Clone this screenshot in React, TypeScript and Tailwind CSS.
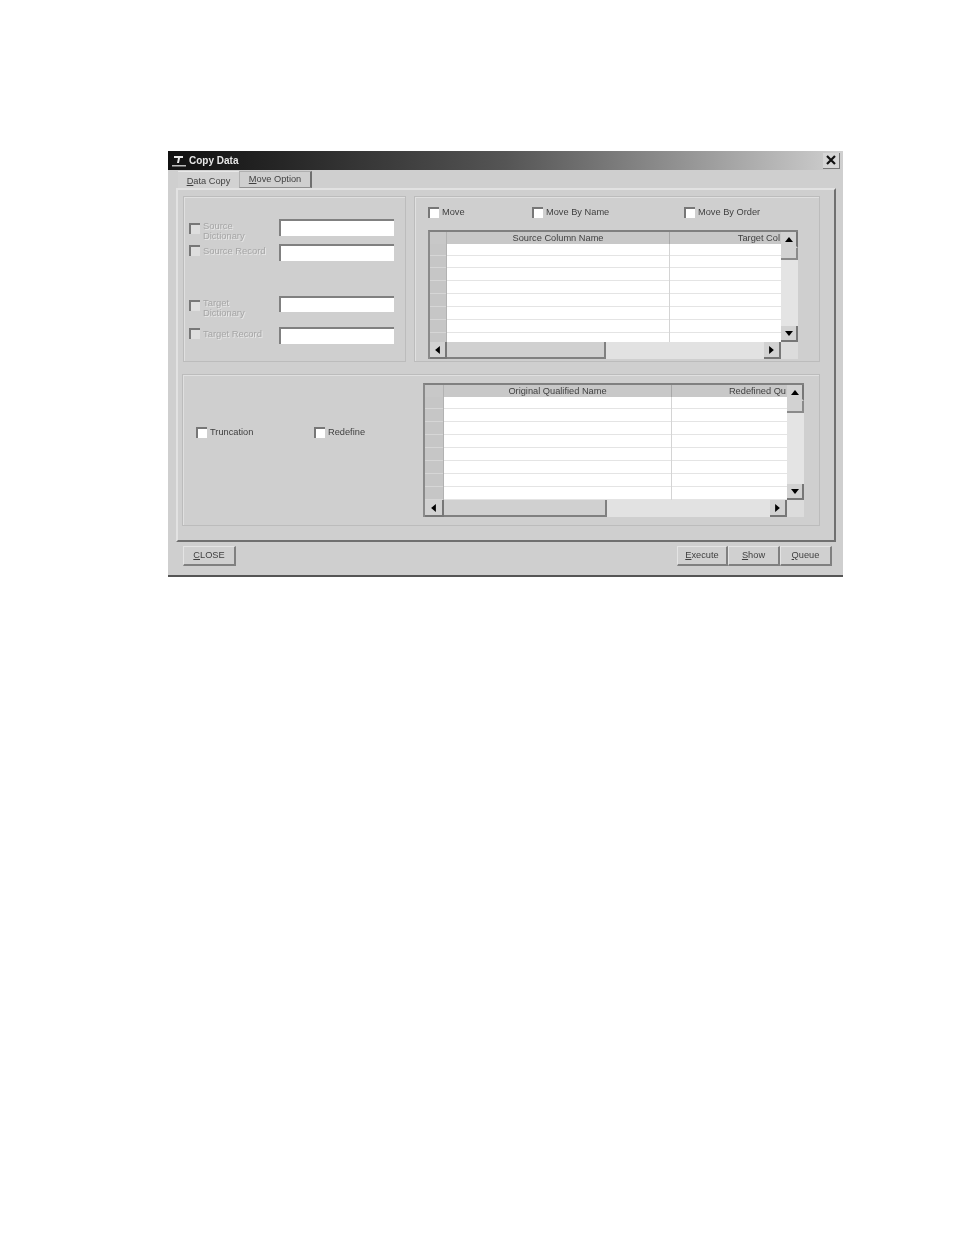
function Check({ disabled }: { disabled?: boolean }) {
  return (
    <span
      className={`block w-[11px] h-[11px] shrink-0 border-t-2 border-l-2 border-t-[#777777] border-l-[#777777] ${
        disabled ? "bg-[#dedede]" : "bg-white"
      }`}
    />
  );
}

function Arrow({ dir }: { dir: "up" | "down" | "left" | "right" }) {
  const points = {
    up: "0,6 5,0 10,6",
    down: "0,0 10,0 5,6",
    left: "6,0 6,10 0,5",
    right: "0,0 0,10 6,5",
  }[dir];
  const size = dir === "up" || dir === "down" ? "w-[8px] h-[5px]" : "w-[5px] h-[8px]";
  const box = dir === "up" || dir === "down" ? "0 0 10 6" : "0 0 6 10";
  return (
    <svg viewBox={box} className={size}>
      <polygon points={points} fill="#000" />
    </svg>
  );
}

function ScrollBtn({ dir, className }: { dir: "up" | "down" | "left" | "right"; className: string }) {
  return (
    <div
      className={`flex items-center justify-center shrink-0 bg-[#d2d2d2] border-r-2 border-b-2 border-r-[#777777] border-b-[#777777] ${className}`}
    >
      <Arrow dir={dir} />
    </div>
  );
}

function Lines({ rows, short, line, className }: { rows: number; short: number; line: string; className: string }) {
  return (
    <div className={className}>
      {Array.from({ length: rows }).map((_, i) => (
        <div key={i} className={`${i < short ? "h-[12px]" : "h-[13px]"} border-b ${line}`} />
      ))}
    </div>
  );
}

function Grid({
  first,
  second,
  rowW,
  colW,
  secondW,
  thumbW,
  rows,
  short,
  bodyH,
}: {
  first: string;
  second: string;
  rowW: string;
  colW: string;
  secondW: string;
  thumbW: string;
  rows: number;
  short: number;
  bodyH: string;
}) {
  return (
    <div className="flex flex-col border-t-2 border-l-2 border-t-[#808080] border-l-[#8a8a8a]">
      <div className="flex">
        <div className="flex flex-col">
          {/* header */}
          <div className="flex h-[12px] bg-[#c8c8c8] text-[9.25px] leading-[12px] text-[#3f3f3f]">
            <div className={`${rowW} border-r border-[#b2b2b2]`} />
            <div className={`${colW} text-center border-r border-[#a8a8a8]`}>{first}</div>
            <div className={`${secondW} overflow-hidden whitespace-nowrap text-right pr-[1px]`}>{second}</div>
          </div>
          <div className={`flex ${bodyH} overflow-hidden`}>
            <Lines rows={rows} short={short} line="border-[#d6d6d6]" className={`${rowW} bg-[#c6c6c6] border-r border-[#b2b2b2]`} />
            <Lines rows={rows} short={short} line="border-[#e4e4e4]" className={`${colW} bg-white border-r border-[#d4d4d4]`} />
            <Lines rows={rows} short={short} line="border-[#e4e4e4]" className={`${secondW} bg-white`} />
          </div>
        </div>
        {/* vertical scrollbar */}
        <div className="flex flex-col w-[17px] bg-[#e4e4e4]">
          <ScrollBtn dir="up" className="h-[16px] w-[17px] border-b-[#d2d2d2]" />
          <div className="h-[12px] bg-[#d2d2d2] border-b-2 border-r-2 border-[#8a8a8a]" />
          <div className="flex-1" />
          <ScrollBtn dir="down" className="h-[16px] w-[17px]" />
        </div>
      </div>
      {/* horizontal scrollbar */}
      <div className="flex h-[17px]">
        <ScrollBtn dir="left" className={`${rowW} h-[17px]`} />
        <div className={`${thumbW} bg-[#d0d0d0] border-r-2 border-b-2 border-[#808080]`} />
        <div className="flex-1 bg-[#e2e2e2]" />
        <ScrollBtn dir="right" className="w-[17px] h-[17px]" />
        <div className="w-[17px] bg-[#dcdcdc]" />
      </div>
    </div>
  );
}

function DisabledRow({
  label,
  boxH,
  mt,
  checkMt,
}: {
  label: string;
  boxH: string;
  mt: string;
  checkMt: string;
}) {
  return (
    <div className={`flex h-[20px] ${mt}`}>
      <div className="w-[90px] flex items-start">
        <div className={checkMt}>
          <Check disabled />
        </div>
        <div className="ml-[3px] pt-[2px] w-[70px] text-[9.4px] leading-[10px] text-[#a6a6a6] [text-shadow:1px_1px_0_#e8e8e8]">
          {label}
        </div>
      </div>
      <div className={`w-[115px] ${boxH} bg-white border-t-2 border-l-2 border-t-[#808080] border-l-[#808080]`} />
    </div>
  );
}

function Opt({ label, className }: { label: string; className: string }) {
  return (
    <div className={`flex items-center gap-[3px] ${className}`}>
      <Check />
      <span className="text-[9.25px] leading-[11px] text-[#3f3f3f]">{label}</span>
    </div>
  );
}

function Btn({ label, className }: { label: React.ReactNode; className: string }) {
  return (
    <div
      className={`h-[20px] flex items-center justify-center bg-[#d0d0d0] border-r-2 border-b-2 border-r-[#808080] border-b-[#808080] border-t border-l border-t-[#e4e4e4] border-l-[#e4e4e4] text-[9.25px] text-[#3f3f3f] ${className}`}
    >
      {label}
    </div>
  );
}

export default function App() {
  return (
    <div className="min-h-[1235px] bg-white pt-[151px] pl-[168px] font-['Liberation_Sans',Arial,sans-serif]">
      <div className="w-[675px] h-[426px] flex flex-col bg-[#cfcfcf] border-b-2 border-[#555555] blur-[0.7px]">
        {/* title bar */}
        <div className="h-[19px] shrink-0 flex items-center pl-[3px] pr-[3px] bg-gradient-to-r from-[#111111] via-[#555555] to-[#d0d0d0]">
          <svg viewBox="0 0 16 14" className="w-[16px] h-[14px]">
            <path d="M3 2h9v2H9l-1 5H6l1-5H3z" fill="#e8e8e8" />
            <rect x="1" y="11" width="14" height="1.5" fill="#bbbbbb" />
          </svg>
          <span className="ml-[2px] text-[10px] font-bold text-[#e6e6e6]">Copy Data</span>
          <div className="ml-auto w-[17px] h-[16px] flex items-center justify-center bg-[#d6d6d6] border-r border-b border-[#777777]">
            <svg viewBox="0 0 10 10" className="w-[10px] h-[10px]">
              <path d="M1 1l8 8M9 1l-8 8" stroke="#111" strokeWidth="2.2" />
            </svg>
          </div>
        </div>

        {/* tabs */}
        <div className="h-[18px] shrink-0 flex pl-[10px] pt-[1px] text-[9.25px] text-[#3f3f3f]">
          <div className="w-[61px] h-[18px] pt-[2px] flex items-center justify-center bg-[#d2d2d2] border-t border-[#e8e8e8]">
            <span>
              <u>D</u>ata Copy
            </span>
          </div>
          <div className="w-[73px] h-[17px] pt-[1px] flex items-center justify-center border border-[#b0b0b0] border-r-2 border-r-[#707070] border-b-[#909090]">
            <span>
              <u>M</u>ove Option
            </span>
          </div>
        </div>

        {/* tab page */}
        <div className="ml-[8px] w-[660px] h-[354px] shrink-0 border-t-2 border-l-2 border-t-[#e2e2e2] border-l-[#e2e2e2] border-r-2 border-b-2 border-r-[#707070] border-b-[#707070] pt-[6px] pl-[5px] flex flex-col">
          <div className="flex gap-[8px]">
            {/* source / target */}
            <div className="w-[223px] h-[166px] border border-[#bcbcbc] shadow-[inset_1px_1px_0_#e0e0e0] pl-[5px] flex flex-col">
              <DisabledRow label="Source Dictionary" boxH="h-[17px]" mt="mt-[22px]" checkMt="mt-[4px]" />
              <DisabledRow label="Source Record" boxH="h-[17px]" mt="mt-[5px]" checkMt="mt-[1px]" />
              <DisabledRow label="Target Dictionary" boxH="h-[16px]" mt="mt-[32px]" checkMt="mt-[4px]" />
              <DisabledRow label="Target Record" boxH="h-[17px]" mt="mt-[11px]" checkMt="mt-[1px]" />
            </div>

            {/* move options */}
            <div className="w-[406px] h-[166px] border border-[#bcbcbc] shadow-[inset_1px_1px_0_#e0e0e0] pl-[13px]">
              <div className="flex mt-[10px] h-[11px]">
                <Opt label="Move" className="w-[104px]" />
                <Opt label="Move By Name" className="w-[152px]" />
                <Opt label="Move By Order" className="w-[100px]" />
              </div>
              <div className="mt-[12px] w-[370px]">
                <Grid
                  first="Source Column Name"
                  second="Target Col"
                  rowW="w-[17px]"
                  colW="w-[223px]"
                  secondW="w-[111px]"
                  thumbW="w-[159px]"
                  rows={8}
                  short={2}
                  bodyH="h-[98px]"
                />
              </div>
            </div>
          </div>

          {/* truncation / redefine */}
          <div className="-ml-[1px] mt-[12px] w-[638px] h-[152px] border border-[#bcbcbc] shadow-[inset_1px_1px_0_#e0e0e0] flex">
            <div className="w-[240px] pl-[13px]">
              <div className="flex mt-[52px]">
                <Opt label="Truncation" className="w-[118px]" />
                <Opt label="Redefine" className="w-[100px]" />
              </div>
            </div>
            <div className="w-[381px] mt-[8px]">
              <Grid
                first="Original Qualified Name"
                second="Redefined Qu"
                rowW="w-[19px]"
                colW="w-[228px]"
                secondW="w-[115px]"
                thumbW="w-[163px]"
                rows={8}
                short={1}
                bodyH="h-[103px]"
              />
            </div>
          </div>
        </div>

        {/* footer */}
        <div className="flex pl-[15px] pt-[4px]">
          <Btn
            label={
              <span>
                <u>C</u>LOSE
              </span>
            }
            className="w-[53px]"
          />
          <div className="ml-auto mr-[11px] flex">
            <Btn
              label={
                <span>
                  <u>E</u>xecute
                </span>
              }
              className="w-[51px]"
            />
            <Btn
              label={
                <span>
                  <u>S</u>how
                </span>
              }
              className="w-[52px]"
            />
            <Btn
              label={
                <span>
                  <u>Q</u>ueue
                </span>
              }
              className="w-[52px]"
            />
          </div>
        </div>
      </div>
    </div>
  );
}
